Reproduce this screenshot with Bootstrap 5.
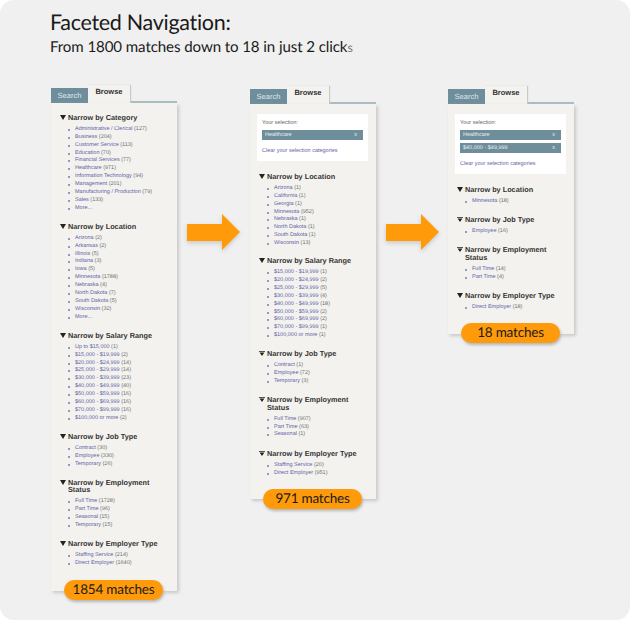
<!DOCTYPE html>
<html lang="en">
<head>
    <meta charset="UTF-8">
    <title>Faceted Navigation</title>
    <link href="https://cdn.jsdelivr.net/npm/bootstrap@5.3.3/dist/css/bootstrap.min.css" rel="stylesheet">
    <style>
        body { background: #fff; text-rendering: geometricPrecision; }
        .sheet { width: 630px; height: 620px; background: #f0f0f0; border-radius: 14px; overflow: hidden; padding: 8px 0 0 50px; }
        .sheet-title { font: 400 21.5px/28px Lato, sans-serif; letter-spacing: -0.3px; color: #1a1a1a; margin: 0; }
        .sheet-sub { font: 400 15.1px/20px Lato, sans-serif; letter-spacing: -0.1px; color: #1a1a1a; margin: 1px 0 0; }
        .sub-tail { color: #777; font-size: 12.5px; }
        .columns { margin-top: 27px; margin-left: 1px; }
        .facet-panel { width: 126px; font-family: "Liberation Sans", Arial, sans-serif; }
        .panel-low { margin-top: 1px; }
        .tab-row { height: 18px; border-bottom: 2px solid #a9bcc4; }
        .tab-search { width: 37px; height: 15px; margin-top: 3px; background: #6f8e9c; color: #dfe7ea; font-size: 7.5px; line-height: 15px; text-align: center; }
        .tab-browse { width: 42px; height: 18px; background: #f3f2ee; color: #333; font-size: 7.5px; font-weight: 700; line-height: 14px; text-align: center; box-shadow: 1px 0 1px #c9c9c6; }
        .panel-body-area { background: #f3f2ee; padding: 10px 7px 0 9px; box-shadow: 2px 2px 3px #c9c9c7; }
        .panel-one { height: 488px; }
        .panel-h-two { height: 395px; }
        .panel-h-three { height: 230px; }
        .chosen-box { background: #fff; padding: 5px 5px 6px; margin: 0 1px 11px -2px; font-size: 5.5px; line-height: 8px; color: #666; }
        .chosen-bar { background: #6f8e9c; color: #e8eef0; height: 10px; line-height: 10px; padding: 0 6px 0 3px; margin-top: 3px; }
        .chosen-list { margin-top: 2px; }
        .chosen-clear { color: #5f63a8; margin-top: 7px; }
        .facet-group { margin-bottom: 9.4px; }
        .facet-group-tight { margin-bottom: 8.4px; }
        .facet-head { font-size: 7.3px; line-height: 7.4px; font-weight: 700; color: #333; margin: 0 0 3.5px; padding: 1px 0 1px 8px; position: relative; }
        .facet-head svg { position: absolute; left: 0; top: 2px; }
        .facet-list { margin: 0; padding: 0 0 0 15px; list-style: none; }
        .facet-list li { font-size: 5.5px; line-height: 7.87px; color: #707070; position: relative; white-space: nowrap; }
        .facet-list li::before { content: ""; position: absolute; left: -7px; top: 3px; width: 2px; height: 2px; background: #9598c4; }
        .facet-list a { color: #5f63a8; text-decoration: none; }
        .match-pill { position: absolute; left: 13px; bottom: -9px; width: 99px; height: 20px; background: #ff9a0a; color: #1a1a1a; font: 400 13.5px/19px Lato, sans-serif; letter-spacing: -0.2px; text-align: center; box-shadow: 1px 2px 3px #b5b5b5; }
        .panel-h-two .match-pill { bottom: -10px; }
        .flow-arrow { width: 53px; height: 36px; margin: 129px 10px 0; flex: none; overflow: visible; filter: drop-shadow(0 2px 2px #c8c8c8); }
        .flow-arrow-last { margin-right: 9px; }
    </style>
</head>
<body class="m-0">
<svg width="0" height="0" class="position-absolute">
    <symbol id="tri" viewBox="0 0 6 5"><path d="M0 0h6L3 5z" fill="#222"/></symbol>
    <symbol id="tribar" viewBox="0 0 6 5"><path d="M0 0h6v.8H0zM.6 1.5h4.8L3 5z" fill="#222"/></symbol>
</svg>
<div class="sheet">
    <h1 class="sheet-title">Faceted Navigation:</h1>
    <p class="sheet-sub">From 1800 matches down to 18 in just 2 click<span class="sub-tail">s</span></p>
    <div class="columns d-flex align-items-start">

        <div class="facet-panel">
            <div class="tab-row d-flex"><div class="tab-search">Search</div><div class="tab-browse">Browse</div></div>
            <div class="panel-body-area panel-one position-relative">
                <div class="facet-group">
                    <h6 class="facet-head"><svg width="6" height="5"><use href="#tri"/></svg>Narrow by Category</h6>
                    <ul class="facet-list">
                        <li><a href="#">Administrative / Clerical</a> (127)</li>
                        <li><a href="#">Business</a> (204)</li>
                        <li><a href="#">Customer Service</a> (113)</li>
                        <li><a href="#">Education</a> (70)</li>
                        <li><a href="#">Financial Services</a> (77)</li>
                        <li><a href="#">Healthcare</a> (971)</li>
                        <li><a href="#">Information Technology</a> (94)</li>
                        <li><a href="#">Management</a> (201)</li>
                        <li><a href="#">Manufacturing / Production</a> (79)</li>
                        <li><a href="#">Sales</a> (133)</li>
                        <li><a href="#">More...</a></li>
                    </ul>
                </div>
                <div class="facet-group">
                    <h6 class="facet-head"><svg width="6" height="5"><use href="#tri"/></svg>Narrow by Location</h6>
                    <ul class="facet-list">
                        <li><a href="#">Arizona</a> (2)</li>
                        <li><a href="#">Arkansas</a> (2)</li>
                        <li><a href="#">Illinois</a> (5)</li>
                        <li><a href="#">Indiana</a> (3)</li>
                        <li><a href="#">Iowa</a> (5)</li>
                        <li><a href="#">Minnesota</a> (1788)</li>
                        <li><a href="#">Nebraska</a> (4)</li>
                        <li><a href="#">North Dakota</a> (7)</li>
                        <li><a href="#">South Dakota</a> (5)</li>
                        <li><a href="#">Wisconsin</a> (32)</li>
                        <li><a href="#">More...</a></li>
                    </ul>
                </div>
                <div class="facet-group">
                    <h6 class="facet-head"><svg width="6" height="5"><use href="#tri"/></svg>Narrow by Salary Range</h6>
                    <ul class="facet-list">
                        <li><a href="#">Up to $15,000</a> (1)</li>
                        <li><a href="#">$15,000 - $19,999</a> (2)</li>
                        <li><a href="#">$20,000 - $24,999</a> (14)</li>
                        <li><a href="#">$25,000 - $29,999</a> (14)</li>
                        <li><a href="#">$30,000 - $39,999</a> (23)</li>
                        <li><a href="#">$40,000 - $49,999</a> (40)</li>
                        <li><a href="#">$50,000 - $59,999</a> (16)</li>
                        <li><a href="#">$60,000 - $69,999</a> (16)</li>
                        <li><a href="#">$70,000 - $99,999</a> (16)</li>
                        <li><a href="#">$100,000 or more</a> (2)</li>
                    </ul>
                </div>
                <div class="facet-group">
                    <h6 class="facet-head"><svg width="6" height="5"><use href="#tri"/></svg>Narrow by Job Type</h6>
                    <ul class="facet-list">
                        <li><a href="#">Contract</a> (30)</li>
                        <li><a href="#">Employee</a> (330)</li>
                        <li><a href="#">Temporary</a> (26)</li>
                    </ul>
                </div>
                <div class="facet-group">
                    <h6 class="facet-head"><svg width="6" height="5"><use href="#tri"/></svg>Narrow by Employment Status</h6>
                    <ul class="facet-list">
                        <li><a href="#">Full Time</a> (1728)</li>
                        <li><a href="#">Part Time</a> (96)</li>
                        <li><a href="#">Seasonal</a> (15)</li>
                        <li><a href="#">Temporary</a> (15)</li>
                    </ul>
                </div>
                <div class="facet-group">
                    <h6 class="facet-head"><svg width="6" height="5"><use href="#tri"/></svg>Narrow by Employer Type</h6>
                    <ul class="facet-list">
                        <li><a href="#">Staffing Service</a> (214)</li>
                        <li><a href="#">Direct Employer</a> (1640)</li>
                    </ul>
                </div>
                <div class="match-pill rounded-pill">1854 matches</div>
            </div>
        </div>

        <svg class="flow-arrow" viewBox="0 0 53 36"><path d="M0 10h35V0l18 18-18 18V27H0z" fill="#ff9a0a"/></svg>

        <div class="facet-panel panel-low">
            <div class="tab-row d-flex"><div class="tab-search">Search</div><div class="tab-browse">Browse</div></div>
            <div class="panel-body-area panel-h-two position-relative">
                <div class="chosen-box">
                    <div>Your selection:</div>
                    <div class="chosen-list">
                        <div class="chosen-bar d-flex justify-content-between"><span>Healthcare</span><span>x</span></div>
                    </div>
                    <div class="chosen-clear">Clear your selection categories</div>
                </div>
                <div class="facet-group facet-group-tight">
                    <h6 class="facet-head"><svg width="6" height="5"><use href="#tri"/></svg>Narrow by Location</h6>
                    <ul class="facet-list">
                        <li><a href="#">Arizona</a> (1)</li>
                        <li><a href="#">California</a> (1)</li>
                        <li><a href="#">Georgia</a> (1)</li>
                        <li><a href="#">Minnesota</a> (952)</li>
                        <li><a href="#">Nebraska</a> (1)</li>
                        <li><a href="#">North Dakota</a> (1)</li>
                        <li><a href="#">South Dakota</a> (1)</li>
                        <li><a href="#">Wisconsin</a> (13)</li>
                    </ul>
                </div>
                <div class="facet-group">
                    <h6 class="facet-head"><svg width="6" height="5"><use href="#tri"/></svg>Narrow by Salary Range</h6>
                    <ul class="facet-list">
                        <li><a href="#">$15,000 - $19,999</a> (1)</li>
                        <li><a href="#">$20,000 - $24,999</a> (2)</li>
                        <li><a href="#">$25,000 - $29,999</a> (5)</li>
                        <li><a href="#">$30,000 - $39,999</a> (4)</li>
                        <li><a href="#">$40,000 - $49,999</a> (18)</li>
                        <li><a href="#">$50,000 - $59,999</a> (2)</li>
                        <li><a href="#">$60,000 - $69,999</a> (2)</li>
                        <li><a href="#">$70,000 - $99,999</a> (1)</li>
                        <li><a href="#">$100,000 or more</a> (1)</li>
                    </ul>
                </div>
                <div class="facet-group">
                    <h6 class="facet-head"><svg width="6" height="5"><use href="#tribar"/></svg>Narrow by Job Type</h6>
                    <ul class="facet-list">
                        <li><a href="#">Contract</a> (1)</li>
                        <li><a href="#">Employee</a> (72)</li>
                        <li><a href="#">Temporary</a> (3)</li>
                    </ul>
                </div>
                <div class="facet-group">
                    <h6 class="facet-head"><svg width="6" height="5"><use href="#tribar"/></svg>Narrow by Employment Status</h6>
                    <ul class="facet-list">
                        <li><a href="#">Full Time</a> (907)</li>
                        <li><a href="#">Part Time</a> (63)</li>
                        <li><a href="#">Seasonal</a> (1)</li>
                    </ul>
                </div>
                <div class="facet-group">
                    <h6 class="facet-head"><svg width="6" height="5"><use href="#tribar"/></svg>Narrow by Employer Type</h6>
                    <ul class="facet-list">
                        <li><a href="#">Staffing Service</a> (20)</li>
                        <li><a href="#">Direct Employer</a> (951)</li>
                    </ul>
                </div>
                <div class="match-pill rounded-pill">971 matches</div>
            </div>
        </div>

        <svg class="flow-arrow flow-arrow-last" viewBox="0 0 53 36"><path d="M0 10h35V0l18 18-18 18V27H0z" fill="#ff9a0a"/></svg>

        <div class="facet-panel panel-low">
            <div class="tab-row d-flex"><div class="tab-search">Search</div><div class="tab-browse">Browse</div></div>
            <div class="panel-body-area panel-h-three position-relative">
                <div class="chosen-box">
                    <div>Your selection:</div>
                    <div class="chosen-list">
                        <div class="chosen-bar d-flex justify-content-between"><span>Healthcare</span><span>x</span></div>
                        <div class="chosen-bar d-flex justify-content-between"><span>$40,000 - $49,999</span><span>x</span></div>
                    </div>
                    <div class="chosen-clear">Clear your selection categories</div>
                </div>
                <div class="facet-group">
                    <h6 class="facet-head"><svg width="6" height="5"><use href="#tri"/></svg>Narrow by Location</h6>
                    <ul class="facet-list">
                        <li><a href="#">Minnesota</a> (18)</li>
                    </ul>
                </div>
                <div class="facet-group">
                    <h6 class="facet-head"><svg width="6" height="5"><use href="#tribar"/></svg>Narrow by Job Type</h6>
                    <ul class="facet-list">
                        <li><a href="#">Employee</a> (16)</li>
                    </ul>
                </div>
                <div class="facet-group">
                    <h6 class="facet-head"><svg width="6" height="5"><use href="#tribar"/></svg>Narrow by Employment Status</h6>
                    <ul class="facet-list">
                        <li><a href="#">Full Time</a> (14)</li>
                        <li><a href="#">Part Time</a> (4)</li>
                    </ul>
                </div>
                <div class="facet-group">
                    <h6 class="facet-head"><svg width="6" height="5"><use href="#tri"/></svg>Narrow by Employer Type</h6>
                    <ul class="facet-list">
                        <li><a href="#">Direct Employer</a> (18)</li>
                    </ul>
                </div>
                <div class="match-pill rounded-pill">18 matches</div>
            </div>
        </div>

    </div>
</div>
<script src="https://cdn.jsdelivr.net/npm/bootstrap@5.3.3/dist/js/bootstrap.bundle.min.js"></script>
</body>
</html>
